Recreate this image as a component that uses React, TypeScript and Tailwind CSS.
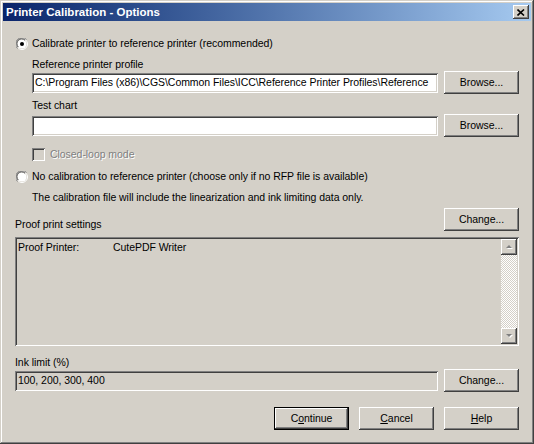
import type { ReactNode } from "react";

const raised =
  "shadow-[inset_-1px_-1px_#404040,inset_1px_1px_#ffffff,inset_-2px_-2px_#808080]";
const sunken =
  "shadow-[inset_1px_1px_#808080,inset_-1px_-1px_#ffffff,inset_2px_2px_#404040,inset_-2px_-2px_#d4d0c8]";

function Radio({ checked }: { checked?: boolean }) {
  return (
    <svg width="12" height="12" viewBox="0 0 12 12" className="shrink-0">
      <circle cx="6" cy="6" r="5.5" fill="none" stroke="#ffffff" strokeWidth="1" />
      <path d="M10.5 1.5 A6 6 0 0 0 1.5 10.5" fill="none" stroke="#808080" strokeWidth="1" />
      <circle cx="6" cy="6" r="4.5" fill="#ffffff" />
      <path d="M9 2.2 A4.6 4.6 0 0 0 2.2 9" fill="none" stroke="#404040" strokeWidth="1" />
      {checked && <circle cx="6" cy="6" r="2" fill="#000000" />}
    </svg>
  );
}

function Button({ children, def }: { children: ReactNode; def?: boolean }) {
  if (def) {
    return (
      <div className="h-[23px] w-[75px] shrink-0 border border-black bg-[#d4d0c8]">
        <div className={`flex h-full w-full items-center justify-center ${raised}`}>{children}</div>
      </div>
    );
  }
  return (
    <div className={`flex h-[23px] w-[75px] shrink-0 items-center justify-center bg-[#d4d0c8] ${raised}`}>
      {children}
    </div>
  );
}

function Arrow({ up }: { up?: boolean }) {
  return (
    <div className={`flex h-[16px] w-[16px] items-center justify-center bg-[#d4d0c8] ${raised}`}>
      <svg width="9" height="6" viewBox="0 0 9 6">
        {up ? (
          <>
            <path d="M2 5 L8 5 L5 2 Z" fill="#ffffff" />
            <path d="M1 4 L7 4 L4 1 Z" fill="#808080" />
          </>
        ) : (
          <>
            <path d="M2 2 L8 2 L5 5 Z" fill="#ffffff" />
            <path d="M1 1 L7 1 L4 4 Z" fill="#808080" />
          </>
        )}
      </svg>
    </div>
  );
}

export default function App() {
  return (
    <div
      className="flex h-[444px] w-[534px] flex-col bg-[#d4d0c8] p-[3px] text-[10.5px] leading-[13px] tracking-[-0.05px] text-black shadow-[inset_-1px_-1px_#404040,inset_1px_1px_#d4d0c8,inset_-2px_-2px_#808080,inset_2px_2px_#ffffff]"
      style={{ fontFamily: '"Liberation Sans", Arial, sans-serif' }}
    >
      {/* title bar */}
      <div className="flex h-[18px] items-center justify-between bg-gradient-to-r from-[#0a246a] to-[#a6caf0] pl-[3px] pr-[2px]">
        <span className="text-[11.5px] font-bold tracking-normal text-white">Printer Calibration - Options</span>
        <div className={`flex h-[14px] w-[16px] items-center justify-center bg-[#d4d0c8] ${raised}`}>
          <svg width="8" height="7" viewBox="0 0 8 7">
            <path d="M0.5 0.5 L7 6.5 M7 0.5 L0.5 6.5" stroke="#000" strokeWidth="1.6" />
          </svg>
        </div>
      </div>

      <div className="flex flex-col px-[12px]">
        <div className="mt-[16px] flex items-center gap-[4px] pl-[1px]">
          <Radio checked />
          <span>Calibrate printer to reference printer (recommended)</span>
        </div>

        <div className="mt-[8px] pl-[17px]">Reference printer profile</div>
        <div className="flex items-center justify-between pl-[17px]">
          <div className={`h-[20px] w-[406px] overflow-hidden whitespace-nowrap bg-white px-[3px] pt-[3px] ${sunken}`}>
            C:\Program Files (x86)\CGS\Common Files\ICC\Reference Printer Profiles\Reference
          </div>
          <Button>Browse...</Button>
        </div>

        <div className="mt-[5px] pl-[17px]">Test chart</div>
        <div className="mt-[2px] flex items-center justify-between pl-[17px]">
          <div className={`h-[20px] w-[406px] bg-white ${sunken}`} />
          <Button>Browse...</Button>
        </div>

        <div className="mt-[11px] flex items-center gap-[5px] pl-[17px]">
          <div className={`h-[13px] w-[13px] bg-[#d4d0c8] ${sunken}`} />
          <span className="text-[#808080] [text-shadow:1px_1px_#ffffff]">Closed-loop mode</span>
        </div>

        <div className="mt-[9px] flex items-center gap-[4px] pl-[1px]">
          <Radio />
          <span>No calibration to reference printer (choose only if no RFP file is available)</span>
        </div>
        <div className="mt-[8px] pl-[17px]">The calibration file will include the linearization and ink limiting data only.</div>

        <div className="mt-[4px] flex items-end justify-between">
          <span>Proof print settings</span>
          <Button>Change...</Button>
        </div>

        <div className={`mt-[6px] flex h-[109px] w-[504px] bg-[#d4d0c8] p-[2px] ${sunken}`}>
          <div className="flex flex-1 pl-[1px] pt-[2px]">
            <span className="w-[95px]">Proof Printer:</span>
            <span>CutePDF Writer</span>
          </div>
          <div className="flex w-[16px] flex-col">
            <Arrow up />
            <div className="flex-1 bg-[repeating-conic-gradient(#ffffff_0_25%,#d4d0c8_0_50%)] bg-[length:2px_2px]" />
            <Arrow />
          </div>
        </div>

        <div className="mt-[10px]">Ink limit (%)</div>
        <div className="flex items-center justify-between">
          <div className={`h-[20px] w-[423px] bg-[#d4d0c8] px-[3px] pt-[3px] ${sunken}`}>100, 200, 300, 400</div>
          <Button>Change...</Button>
        </div>

        <div className="mt-[15px] flex justify-end gap-[10px]">
          <Button def>
            C<span className="underline">o</span>ntinue
          </Button>
          <Button>
            <span className="underline">C</span>ancel
          </Button>
          <Button>
            <span className="underline">H</span>elp
          </Button>
        </div>
      </div>
    </div>
  );
}
